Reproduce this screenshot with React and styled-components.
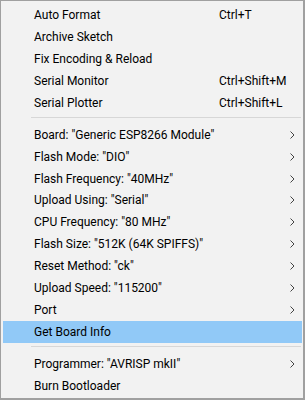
import React from 'react';
import styled, { createGlobalStyle } from 'styled-components';

const Global = createGlobalStyle`
  html, body { margin: 0; padding: 0; background: #f2f2f2; }
  body { font-family: Roboto, "Noto Sans", "Liberation Sans", sans-serif; }
`

const Menu = styled.div`
  width: 305px;
  height: 400px;
  box-sizing: border-box;
  background: #f2f2f2;
  border-style: solid;
  border-color: #a0a0a0;
  border-width: 1px 2px 2px 1px;
  padding: 3px 1px 1px 2px;
  display: flex;
  flex-direction: column;
`

const Item = styled.div`
  height: 22px;
  display: grid;
  grid-template-columns: 185px 1fr 12px;
  align-items: center;
  padding-left: 31px;
  font-size: 12px;
  color: #000;
  white-space: nowrap;
  background: ${p => (p.$active ? '#91c9f7' : 'transparent')};
`

const Label = styled.span``

const Shortcut = styled.span``

const Arrow = styled.span`
  display: flex;
  align-items: center;
`

const Separator = styled.div`
  height: 10px;
  box-sizing: border-box;
  padding: 3px 1px 0 28px;
  &::before {
    content: '';
    display: block;
    height: 1px;
    background: #d7d7d7;
  }
`

function Chevron() {
  return (
    <svg width="5" height="8" viewBox="0 0 5 8">
      <path d="M0.5 0.5 L4 4 L0.5 7.5" fill="none" stroke="#444" strokeWidth="1" />
    </svg>
  )
}

const top = [
  ['Auto Format', 'Ctrl+T'],
  ['Archive Sketch'],
  ['Fix Encoding & Reload'],
  ['Serial Monitor', 'Ctrl+Shift+M'],
  ['Serial Plotter', 'Ctrl+Shift+L'],
]

const board = [
  'Board: "Generic ESP8266 Module"',
  'Flash Mode: "DIO"',
  'Flash Frequency: "40MHz"',
  'Upload Using: "Serial"',
  'CPU Frequency: "80 MHz"',
  'Flash Size: "512K (64K SPIFFS)"',
  'Reset Method: "ck"',
  'Upload Speed: "115200"',
  'Port',
]

export default function App() {
  return (
    <>
      <Global />
      <Menu>
        {top.map(([label, key]) => (
          <Item key={label}>
            <Label>{label}</Label>
            <Shortcut>{key}</Shortcut>
          </Item>
        ))}
        <Separator />
        {board.map(label => (
          <Item key={label}>
            <Label>{label}</Label>
            <Shortcut />
            <Arrow><Chevron /></Arrow>
          </Item>
        ))}
        <Item $active>
          <Label>Get Board Info</Label>
        </Item>
        <Separator />
        <Item>
          <Label>Programmer: "AVRISP mkII"</Label>
          <Shortcut />
          <Arrow><Chevron /></Arrow>
        </Item>
        <Item>
          <Label>Burn Bootloader</Label>
        </Item>
      </Menu>
    </>
  )
}
